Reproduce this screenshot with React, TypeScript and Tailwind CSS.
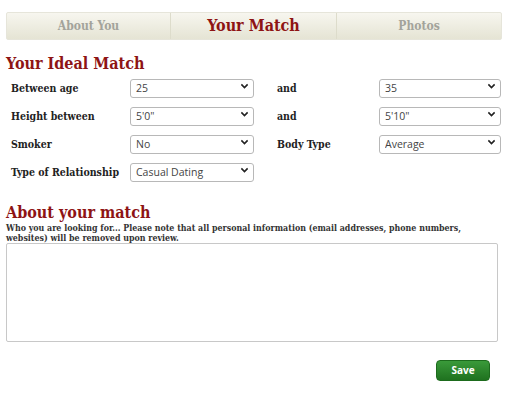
import React from 'react';

const slab = { fontFamily: '"DejaVu Serif Condensed", "DejaVu Serif", serif' };
const sans = { fontFamily: '"Open Sans", "Noto Sans", Arial, sans-serif' };

function Chevron() {
  return (
    <svg
      viewBox="0 0 10 10"
      className="pointer-events-none absolute right-[5px] top-1/2 h-[9px] w-[9px] -translate-y-1/2"
    >
      <path d="M1.5 3.2 L5 6.7 L8.5 3.2" fill="none" stroke="#222" strokeWidth="1.8" />
    </svg>
  );
}

function Select({ value, options, width }: { value: string; options: string[]; width: string }) {
  return (
    <div className={`relative ${width}`}>
      <select
        defaultValue={value}
        style={sans}
        className="h-[19px] w-full appearance-none rounded-[3px] border border-[#b8b8b8] bg-white pl-[5px] text-[10.5px] leading-[17px] text-[#444]"
      >
        {options.map((o) => (
          <option key={o}>{o}</option>
        ))}
      </select>
      <Chevron />
    </div>
  );
}

function Label({ children, className = '' }: { children: React.ReactNode; className?: string }) {
  return (
    <span style={slab} className={`pt-[6px] text-[10.5px] font-bold text-[#222] ${className}`}>
      {children}
    </span>
  );
}

export default function App() {
  return (
    <div className="min-h-[403px] w-[511px] bg-white pt-[12px]">
      {/* tabs */}
      <div className="mx-[6px] flex h-[28px] w-[496px] rounded-[2px] border border-[#e6e5da] bg-gradient-to-b from-[#f7f6ef] to-[#e5e4d4]" style={slab}>
        <div className="flex w-[164px] items-center justify-center border-r border-[#dddccb] text-[12px] font-bold text-[#a3a39b]">
          About You
        </div>
        <div className="flex w-[166px] items-center justify-center border-r border-[#dddccb] text-[16px] font-bold text-[#8e1414]">
          Your Match
        </div>
        <div className="flex flex-1 items-center justify-center text-[12px] font-bold text-[#a3a39b]">
          Photos
        </div>
      </div>

      <h2 style={slab} className="ml-[6px] mt-[14px] text-[16px] font-bold leading-[20px] text-[#8e1414]">
        Your Ideal Match
      </h2>

      <div className="ml-[11px] mt-[2px] flex flex-col gap-[9px]">
        <div className="flex h-[19px] items-center">
          <Label className="w-[119px]">Between age</Label>
          <Select value="25" options={['25']} width="w-[124px]" />
          <Label className="ml-[23px] w-[102px]">and</Label>
          <Select value="35" options={['35']} width="w-[122px]" />
        </div>
        <div className="flex h-[19px] items-center">
          <Label className="w-[119px]">Height between</Label>
          <Select value={'5\'0"'} options={['5\'0"']} width="w-[124px]" />
          <Label className="ml-[23px] w-[102px]">and</Label>
          <Select value={'5\'10"'} options={['5\'10"']} width="w-[122px]" />
        </div>
        <div className="flex h-[19px] items-center">
          <Label className="w-[119px]">Smoker</Label>
          <Select value="No" options={['No']} width="w-[124px]" />
          <Label className="ml-[23px] w-[102px]">Body Type</Label>
          <Select value="Average" options={['Average']} width="w-[122px]" />
        </div>
        <div className="flex h-[19px] items-center">
          <Label className="w-[119px]">Type of Relationship</Label>
          <Select value="Casual Dating" options={['Casual Dating']} width="w-[124px]" />
        </div>
      </div>

      <h2 style={slab} className="ml-[6px] mt-[24px] text-[16px] font-bold leading-[20px] text-[#8e1414]">
        About your match
      </h2>
      <p style={slab} className="ml-[6px] mt-[1px] w-[490px] text-[8.8px] font-bold leading-[9.5px] text-[#333]">
        Who you are looking for... Please note that all personal information (email addresses, phone numbers,
        websites) will be removed upon review.
      </p>
      <textarea className="ml-[6px] mt-0 block h-[99px] w-[492px] resize-none rounded-[2px] border border-[#c8c8c8] bg-white" />

      <div className="mt-[18px] flex justify-end pr-[21px]">
        <button
          style={sans}
          className="h-[21px] w-[54px] rounded-[4px] border border-[#1d6b1d] bg-gradient-to-b from-[#3a9a3a] to-[#1f721f] text-[10px] font-bold text-white"
        >
          Save
        </button>
      </div>
    </div>
  );
}
